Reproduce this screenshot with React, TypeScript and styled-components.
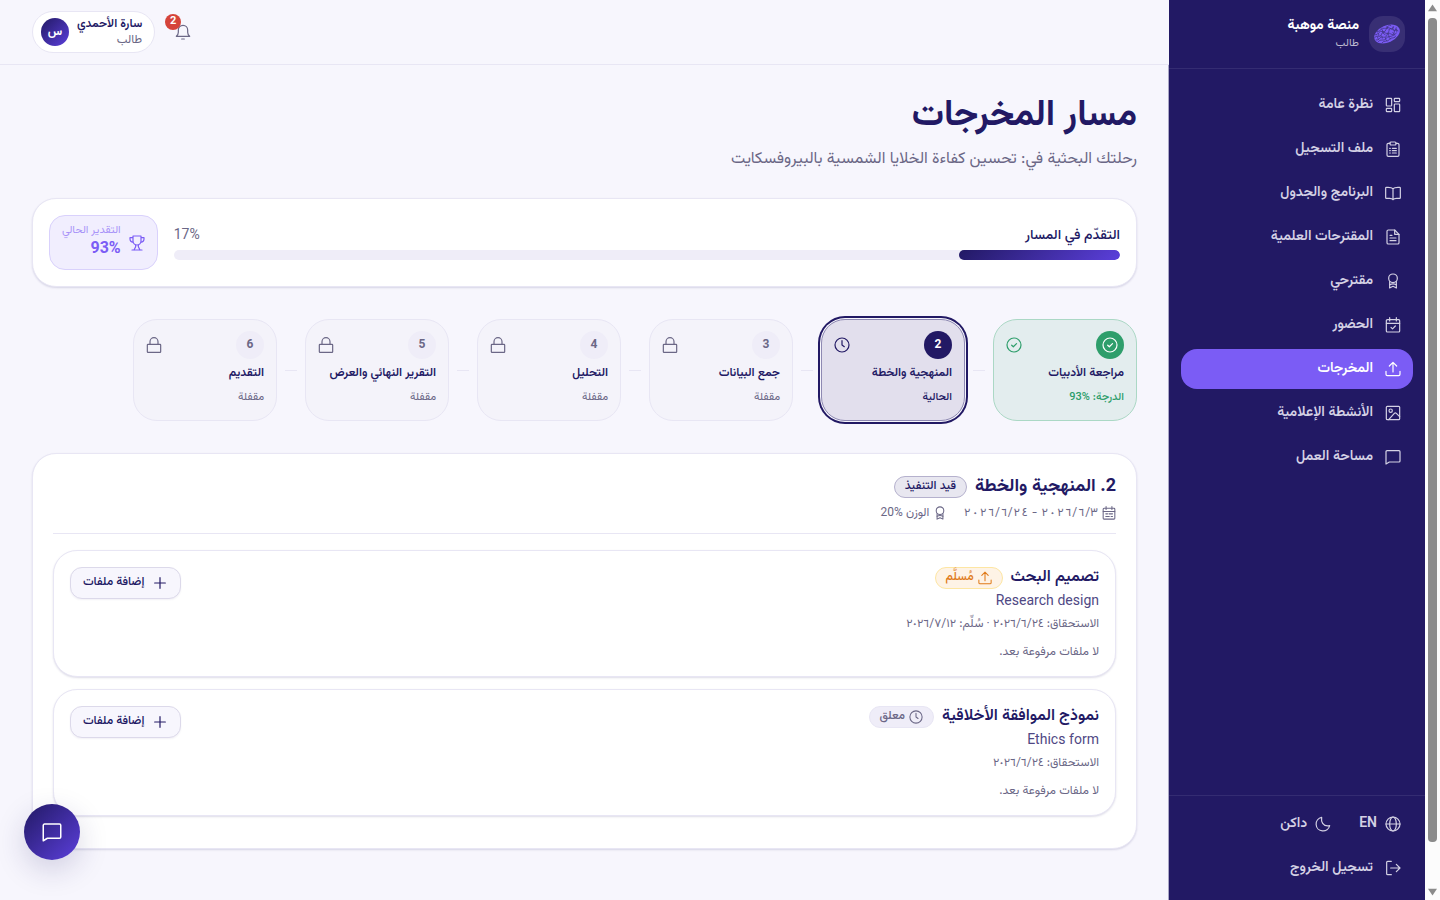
import React from "react";
import styled, { createGlobalStyle, css } from "styled-components";

const c = {
  bg: "#f7f6fd",
  navy: "#221964",
  violet: "#7b5cf5",
  indigo: "#5b3fdb",
  muted: "#6b6786",
  line: "#e8e6f4",
  soft: "#efedf8",
  green: "#2e9e6b",
};

const gradient = `linear-gradient(135deg, ${c.navy}, ${c.indigo})`;

const Global = createGlobalStyle`
  *, *::before, *::after { box-sizing: border-box; }
  body {
    margin: 0;
    background: ${c.bg};
    color: ${c.navy};
    font-family: Vazirmatn, Roboto, "Noto Sans", sans-serif;
    font-size: 14px;
    line-height: 20px;
  }
  h1, h2, h3, p, ul, ol { margin: 0; padding: 0; }
  ul, ol { list-style: none; }
  button { font: inherit; color: inherit; cursor: pointer; }
  a { color: inherit; text-decoration: none; }
`;

/* ---------- icons ---------- */

const Svg = styled.svg<{ $size: number }>`
  display: block;
  flex: none;
  width: ${(p) => p.$size}px;
  height: ${(p) => p.$size}px;
  fill: none;
  stroke: currentColor;
  stroke-width: 1.8;
  stroke-linecap: round;
  stroke-linejoin: round;
`;

const paths = {
  grid: (
    <>
      <rect x="2" y="2" width="8" height="11.5" rx="1" />
      <rect x="2" y="17" width="8" height="5" rx="1" />
      <rect x="14" y="2" width="8" height="5" rx="1" />
      <rect x="14" y="10.5" width="8" height="11.5" rx="1" />
    </>
  ),
  clipboard: (
    <>
      <path d="M7.5 3.5H5a2 2 0 0 0-2 2V21a2 2 0 0 0 2 2h14a2 2 0 0 0 2-2V5.500a2 2 0 0 0-2-2h-2.500" />
      <rect x="7.500" y="1.500" width="9" height="4.500" rx="1.500" />
      <path d="M7 11h1M11 11h6M7 14.500h1M11 14.500h6M7 18h1M11 18h6" />
    </>
  ),
  book: <path d="M12 5.500C10.500 4 8 3.500 4.500 3.500H2a1 1 0 0 0-1 1V19a1 1 0 0 0 1 1h5c2.500 0 4 .7 5 2 1-1.300 2.500-2 5-2h5a1 1 0 0 0 1-1V4.500a1 1 0 0 0-1-1h-2.500c-3.500 0-6 .5-7.500 2zm0 0V22" />,
  file: (
    <>
      <path d="M14.500 1.500H5a2 2 0 0 0-2 2v17a2 2 0 0 0 2 2h14a2 2 0 0 0 2-2V8z" />
      <path d="M14.500 1.500V8H21M7.500 9.500h3M7.500 13.500h9M7.500 17.500h9" />
    </>
  ),
  award: (
    <>
      <circle cx="12" cy="8" r="6.500" />
      <path d="M7 13v9.500l5-2.500 5 2.500V13" />
      <path d="M7 17.500c3-1.500 7-1.500 10 0" />
    </>
  ),
  calendarCheck: (
    <>
      <rect x="2" y="4" width="20" height="18.500" rx="1.500" />
      <path d="M7 1v5M17 1v5M2 9.500h20M9 15.500l2.300 2.300L15.500 13.500" />
    </>
  ),
  calendar: (
    <>
      <rect x="2" y="4" width="20" height="18.500" rx="1.500" />
      <path d="M7 1v5M17 1v5M2 9.500h20M6.500 13.500h3M12 13.500h6M6.500 18h6M15.500 18h2.500" />
    </>
  ),
  upload: <path d="M12 16.500V2M6.500 7.500 12 2l5.500 5.500M1.500 15.500V20a2 2 0 0 0 2 2h17a2 2 0 0 0 2-2v-4.500" />,
  image: (
    <>
      <rect x="2" y="2" width="20" height="20" rx="1.500" />
      <circle cx="8.500" cy="8.500" r="2.500" />
      <path d="M5.500 22 14 12.500c1-1 2-1 3 0l5 5" />
    </>
  ),
  chat: <path d="M3 2.500h18a1.500 1.500 0 0 1 1.500 1.500v14a1.500 1.500 0 0 1-1.500 1.500H6.500L1.500 22.500V4A1.500 1.500 0 0 1 3 2.500z" />,
  globe: (
    <>
      <circle cx="12" cy="12" r="10.500" />
      <ellipse cx="12" cy="12" rx="5" ry="10.500" />
      <path d="M1.500 12h21" />
    </>
  ),
  moon: <path d="M10 2A10.300 10.300 0 1 0 22 14.500C17 15.500 13.500 14 11.500 11 9.500 8 9.500 5 10 2z" />,
  logout: <path d="M9.500 2H4a1.500 1.500 0 0 0-1.500 1.500v17A1.500 1.500 0 0 0 4 22h5.500M8.500 12h14M17 6.500l5.500 5.500-5.500 5.500" />,
  bell: (
    <>
      <path d="M2 18.500c2-1.500 3-3.500 3-6V9a7 7 0 0 1 14 0v3.500c0 2.500 1 4.500 3 6z" />
      <path d="M10 22.500h4" />
    </>
  ),
  trophy: (
    <>
      <path d="M6 1.500h12V9a6 6 0 0 1-12 0zM6 4H1.500v2c0 3 1.500 4.500 5 5M18 4h4.500v2c0 3-1.500 4.500-5 5" />
      <path d="M10 15v2.500L7.500 22.500M14 15v2.500l2.500 5M4.500 22.500h15" />
    </>
  ),
  checkCircle: (
    <>
      <circle cx="12" cy="12" r="10.500" />
      <path d="M8.500 12.300l2.500 2.400 4.800-4.700" />
    </>
  ),
  clock: (
    <>
      <circle cx="12" cy="12" r="10.500" />
      <path d="M12 5.500V12l3.500 2.500" />
    </>
  ),
  lock: (
    <>
      <rect x="2" y="11" width="20" height="12" rx="1" />
      <path d="M6 11V7a6 6 0 0 1 12 0v4" />
    </>
  ),
  plus: <path d="M12 4v16M4 12h16" />,
};
type IconName = keyof typeof paths;

const Icon = ({ name, size = 16 }: { name: IconName; size?: number }) => (
  <Svg $size={size} viewBox="0 0 24 24" aria-hidden="true">
    {paths[name]}
  </Svg>
);

/* ---------- shell ---------- */

const Shell = styled.div`
  display: flex;
  height: 100vh;
  overflow: hidden;
`;

const Sidebar = styled.aside`
  display: flex;
  flex-direction: column;
  flex: none;
  width: 256px;
  background: ${c.navy};
  color: #d4d1e4;
  font-weight: 600;
`;

const Brand = styled.div`
  display: flex;
  align-items: center;
  gap: 10px;
  height: 69px;
  padding: 0 20px;
  border-bottom: 1px solid #342c72;
`;

const LogoTile = styled.div`
  display: grid;
  place-items: center;
  width: 36px;
  height: 36px;
  border-radius: 14px;
  background: #382f74;
`;

const BrandName = styled.p`
  color: #fff;
  font-weight: 700;
  line-height: 18px;
`;

const BrandRole = styled.p`
  color: #bdb9d0;
  font-size: 11px;
  font-weight: 400;
  line-height: 14px;
`;

const Nav = styled.nav`
  flex: 1;
  padding: 16px 12px;
`;

const NavList = styled.ul`
  display: flex;
  flex-direction: column;
  gap: 4px;
`;

const navItem = css`
  display: flex;
  align-items: center;
  gap: 12px;
  height: 40px;
  padding: 0 12px;
  border: 0;
  border-radius: 16px;
`;

const NavLink = styled.a<{ $active?: boolean }>`
  ${navItem}
  background: ${(p) => (p.$active ? c.violet : "transparent")};
  color: ${(p) => (p.$active ? "#fff" : "inherit")};
`;

const SideFoot = styled.div`
  display: flex;
  flex-direction: column;
  gap: 4px;
  padding: 8px 12px 12px;
  border-top: 1px solid #342c72;
`;

const FootRow = styled.div`
  display: flex;
  gap: 4px;
`;

const FootButton = styled.button<{ $gap?: number }>`
  ${navItem}
  gap: ${(p) => p.$gap || 12}px;
  background: none;
`;

const Column = styled.div`
  display: flex;
  flex-direction: column;
  flex: 1;
  min-width: 0;
`;

const Header = styled.header`
  display: flex;
  align-items: center;
  justify-content: flex-end;
  gap: 12px;
  flex: none;
  height: 65px;
  padding: 0 32px;
  border-bottom: 1px solid ${c.line};
`;

const BellButton = styled.button`
  position: relative;
  display: grid;
  place-items: center;
  width: 32px;
  height: 32px;
  padding: 0;
  border: 0;
  background: none;
  color: ${c.muted};
`;

const BellBadge = styled.span`
  position: absolute;
  top: -2px;
  left: -2px;
  width: 16px;
  height: 16px;
  border-radius: 50%;
  background: #d5443a;
  color: #fff;
  font-size: 11px;
  font-weight: 700;
  line-height: 16px;
`;

const UserButton = styled.button`
  display: flex;
  align-items: center;
  gap: 8px;
  height: 42px;
  padding: 0 12px 0 8px;
  border: 1px solid ${c.line};
  border-radius: 21px;
  background: #fff;
  text-align: start;
`;

const UserName = styled.span`
  display: block;
  font-size: 12px;
  font-weight: 600;
  line-height: 16px;
`;

const UserRole = styled.span`
  display: block;
  color: ${c.muted};
  font-size: 12px;
  line-height: 16px;
`;

const Avatar = styled.span`
  display: grid;
  place-items: center;
  width: 28px;
  height: 28px;
  border-radius: 50%;
  background: ${gradient};
  color: #fff;
  font-size: 12px;
  font-weight: 700;
`;

const Main = styled.main`
  flex: 1;
  min-height: 0;
  padding: 29px 31px 0 32px;
  border-inline-start: 1px solid #aaa6c6;
`;

const Title = styled.h1`
  font-size: 36px;
  font-weight: 700;
  line-height: 44px;
`;

const Subtitle = styled.p`
  margin-top: 10px;
  color: ${c.muted};
  font-size: 16px;
  line-height: 24px;
`;

const panel = css`
  border: 1px solid ${c.line};
  border-radius: 24px;
  background: #fff;
  box-shadow: 0 1px 2px rgba(34, 25, 100, 0.15);
`;

/* ---------- progress ---------- */

const ProgressCard = styled.section`
  ${panel}
  display: flex;
  align-items: center;
  gap: 16px;
  margin-top: 26px;
  padding: 16px;
`;

const ProgressBody = styled.div`
  flex: 1;
`;

const ProgressTop = styled.div`
  display: flex;
  justify-content: space-between;
  margin-bottom: 4px;
  font-weight: 500;
`;

const ProgressValue = styled.span`
  color: ${c.muted};
  font-weight: 400;
`;

const Track = styled.div`
  height: 10px;
  border-radius: 5px;
  background: ${c.soft};
  overflow: hidden;
`;

const Fill = styled.div`
  height: 100%;
  border-radius: 5px;
  background: ${gradient};
`;

const Grade = styled.div`
  display: flex;
  align-items: center;
  gap: 8px;
  height: 55px;
  padding: 0 12px;
  border: 1px solid #d9d1fc;
  border-radius: 16px;
  background: #f1eefe;
  color: ${c.violet};
`;

const GradeLabel = styled.p`
  color: #a893f8;
  font-size: 11px;
  line-height: 16px;
`;

const GradeValue = styled.p`
  margin-bottom: 2px;
  font-size: 16px;
  font-weight: 700;
  line-height: 22px;
`;

/* ---------- steps ---------- */

const Steps = styled.ol`
  display: flex;
  align-items: center;
  gap: 8px;
  margin-top: 32px;
`;

type State = "done" | "current" | "locked";

const stepLook = {
  done: css`
    border-color: #abd8c5;
    background: #e3edee;
  `,
  current: css`
    border-color: #8e89b2;
    background: #e2dfed;
    box-shadow: 0 0 0 1px ${c.bg}, 0 0 0 3px ${c.navy};
  `,
  locked: css`
    background: #f4f3fa;
  `,
};

const StepCard = styled.button<{ $state: State }>`
  display: flex;
  flex-direction: column;
  width: 144px;
  height: 102px;
  padding: 11px 12px;
  border: 1px solid ${c.line};
  border-radius: 24px;
  text-align: start;
  ${(p) => stepLook[p.$state]}
`;

const StepTop = styled.span<{ $state: State }>`
  display: flex;
  align-items: center;
  justify-content: space-between;
  color: ${(p) => ({ done: c.green, current: c.navy, locked: c.muted })[p.$state]};
`;

const StepNumber = styled.span<{ $state: State }>`
  display: grid;
  place-items: center;
  width: 28px;
  height: 28px;
  border-radius: 50%;
  background: ${(p) => ({ done: c.green, current: c.navy, locked: c.soft })[p.$state]};
  color: ${(p) => (p.$state === "locked" ? c.muted : "#fff")};
  font-size: 12px;
  font-weight: 700;
`;

const StepName = styled.span`
  margin-top: 4px;
  font-size: 12px;
  font-weight: 600;
  line-height: 20px;
`;

const StepNote = styled.span<{ $state: State }>`
  margin-top: 6px;
  color: ${(p) => ({ done: c.green, current: c.navy, locked: c.muted })[p.$state]};
  font-size: 11px;
  font-weight: ${(p) => (p.$state === "locked" ? 400 : 500)};
  line-height: 18px;
`;

const StepItem = styled.li`
  display: flex;
  align-items: center;
  gap: 8px;

  &:not(:last-child)::after {
    content: "";
    width: 12px;
    height: 1px;
    background: ${c.line};
  }
`;

/* ---------- detail ---------- */

const Detail = styled.section`
  ${panel}
  margin-top: 32px;
  padding: 20px 20px 32px;
`;

const DetailHead = styled.header`
  padding-bottom: 12px;
  border-bottom: 1px solid ${c.line};
`;

const Row = styled.div`
  display: flex;
  align-items: center;
  gap: 8px;
`;

const DetailTitle = styled.h2`
  font-size: 18px;
  font-weight: 700;
  line-height: 26px;
`;

const tones = {
  progress: css`
    border-color: #b5b1cd;
    background: #e8e7f0;
    color: ${c.navy};
  `,
  sent: css`
    border-color: #fde6a3;
    background: #fef3e6;
    color: #e07b1a;
  `,
  pending: css`
    border-color: ${c.line};
    background: ${c.soft};
    color: ${c.muted};
  `,
};

const Badge = styled.span<{ $tone: keyof typeof tones }>`
  display: flex;
  align-items: center;
  gap: 4px;
  height: 22px;
  padding: 0 10px;
  border: 1px solid;
  border-radius: 11px;
  font-size: 12px;
  font-weight: 500;
  line-height: 18px;
  ${(p) => tones[p.$tone]}
`;

const BadgeText = styled.span`
  padding-bottom: 2px;
`;

const Meta = styled.div`
  display: flex;
  gap: 16px;
  margin-top: 5px;
  color: ${c.muted};
  font-size: 12px;
  line-height: 16px;
  font-variant-numeric: tabular-nums;
`;

const MetaItem = styled.span`
  display: flex;
  align-items: center;
  gap: 4px;
`;

const Tasks = styled.ul`
  display: flex;
  flex-direction: column;
  gap: 12px;
  margin-top: 16px;
`;

const Task = styled.li`
  ${panel}
  display: flex;
  align-items: flex-start;
  justify-content: space-between;
  padding: 16px;
`;

const TaskTitle = styled.h3`
  font-size: 16px;
  font-weight: 600;
  line-height: 20px;
`;

const TaskEnglish = styled.p`
  margin-top: 3px;
  color: #4f4884;
  font-size: 14px;
  line-height: 20px;
`;

const TaskNote = styled.p<{ $top: number }>`
  margin-top: ${(p) => p.$top}px;
  color: ${c.muted};
  font-size: 12px;
  line-height: 16px;
`;

const AddButton = styled.button`
  display: flex;
  align-items: center;
  gap: 8px;
  height: 32px;
  padding: 0 12px;
  border: 1px solid #dcd9ea;
  border-radius: 12px;
  background: ${c.bg};
  box-shadow: 0 1px 2px rgba(34, 25, 100, 0.06);
  font-size: 12px;
  font-weight: 500;
`;

const ChatButton = styled.button`
  position: fixed;
  left: 24px;
  bottom: 40px;
  display: grid;
  place-items: center;
  width: 56px;
  height: 56px;
  padding: 0;
  border: 0;
  border-radius: 50%;
  background: ${gradient};
  box-shadow: 0 10px 30px rgba(34, 25, 100, 0.18);
  color: #fff;
`;

/* ---------- scroll gutter ---------- */

const Gutter = styled.div`
  display: flex;
  flex-direction: column;
  align-items: center;
  justify-content: space-between;
  flex: none;
  width: 15px;
  padding: 4px 0;
  background: #fcfcfc;
`;

const Thumb = styled.div`
  flex: 1;
  width: 9px;
  margin: 6px 0 46px;
  border-radius: 4px;
  background: #8b8b8b;
`;

const Arrow = styled.svg`
  width: 9px;
  height: 8px;
  fill: #8b8b8b;
`;

/* ---------- data ---------- */

const nav: { icon: IconName; text: string; active?: boolean }[] = [
  { icon: "grid", text: "نظرة عامة" },
  { icon: "clipboard", text: "ملف التسجيل" },
  { icon: "book", text: "البرنامج والجدول" },
  { icon: "file", text: "المقترحات العلمية" },
  { icon: "award", text: "مقترحي" },
  { icon: "calendarCheck", text: "الحضور" },
  { icon: "upload", text: "المخرجات", active: true },
  { icon: "image", text: "الأنشطة الإعلامية" },
  { icon: "chat", text: "مساحة العمل" },
];

const steps: { name: string; state: State; note: React.ReactNode }[] = [
  { name: "مراجعة الأدبيات", state: "done", note: <span>الدرجة: <bdi>93%</bdi></span> },
  { name: "المنهجية والخطة", state: "current", note: "الحالية" },
  { name: "جمع البيانات", state: "locked", note: "مقفلة" },
  { name: "التحليل", state: "locked", note: "مقفلة" },
  { name: "التقرير النهائي والعرض", state: "locked", note: "مقفلة" },
  { name: "التقديم", state: "locked", note: "مقفلة" },
];

const stepIcon: Record<State, IconName> = { done: "checkCircle", current: "clock", locked: "lock" };

const RLM = "\u200f";
const date = (d: string, m: string, y: string) => `${d}${RLM}/${m}${RLM}/${y}`;

const tasks: { title: string; en: string; tone: "sent" | "pending"; icon: IconName; status: string; due: string }[] = [
  {
    title: "تصميم البحث",
    en: "Research design",
    tone: "sent",
    icon: "upload",
    status: "مُسلَّم",
    due: `الاستحقاق: ${date("٢٤", "٦", "٢٠٢٦")} · سُلِّم: ${date("١٢", "٧", "٢٠٢٦")}`,
  },
  {
    title: "نموذج الموافقة الأخلاقية",
    en: "Ethics form",
    tone: "pending",
    icon: "clock",
    status: "معلق",
    due: `الاستحقاق: ${date("٢٤", "٦", "٢٠٢٦")}`,
  },
];

const Logo = () => (
  <svg width="28" height="24" viewBox="0 0 28 24" aria-hidden="true">
    <g transform="rotate(-24 14 12)">
      <ellipse cx="14" cy="12" rx="13.5" ry="8.500" fill={c.violet} />
      <g fill="none" stroke="#382f74" strokeWidth="0.6" strokeLinecap="round">
        <path d="M1 10.500q2-2 4 0t4-.5 4 .5 4-.5 4 .5 4-.5" />
        <path d="M1.500 13q2 1.500 4 0t4 .5 4-.5 4 .5 4-.5 4 .5" />
        <path d="M3 8q2 1 4-.5t4 .5 4-.5 4 .5 4 0" />
        <path d="M3 15.500q2-1.500 4 0t4 .3 4-.5 4 .5 4-.8" />
        <path d="M6 5.800q2 1 4-.3t4 .3 4-.3 3 .5M6 18q2-1 4 0t4 0 4 0 3-.6" />
        <path d="M6 7q1 1.500 0 3M11 5q1 1.500 0 3t1 4M17 5q-1 1.500 0 3M22 8q-1 1.500 0 3M8 11q1 1.500 0 3M15 11q1 1.500 0 3t0 4M20 13q1 1.500 0 3M11 15q-1 1 0 3M24 11q1 1 0 3M4 11v2" />
      </g>
    </g>
  </svg>
);

const ScrollGutter = () => (
  <Gutter aria-hidden="true">
    <Arrow viewBox="0 0 10 8">
      <path d="M5 0l5 7.500H0z" />
    </Arrow>
    <Thumb />
    <Arrow viewBox="0 0 10 8">
      <path d="M5 8L0 .5h10z" />
    </Arrow>
  </Gutter>
);

const BrandText = styled.div`
  display: flex;
  flex-direction: column;
  gap: 2px;
`;

export default function App() {
  return (
    <Shell dir="rtl" lang="ar">
      <Global />
      <ScrollGutter />
      <Sidebar>
        <Brand>
          <LogoTile>
            <Logo />
          </LogoTile>
          <BrandText>
            <BrandName>منصة موهبة</BrandName>
            <BrandRole>طالب</BrandRole>
          </BrandText>
        </Brand>
        <Nav aria-label="القائمة">
          <NavList>
            {nav.map((n) => (
              <li key={n.text}>
                <NavLink href="#" $active={n.active} aria-current={n.active ? "page" : undefined}>
                  <Icon name={n.icon} />
                  {n.text}
                </NavLink>
              </li>
            ))}
          </NavList>
        </Nav>
        <SideFoot>
          <FootRow>
            <FootButton type="button" $gap={8}>
              <Icon name="globe" />
              EN
            </FootButton>
            <FootButton type="button" $gap={8}>
              <Icon name="moon" />
              داكن
            </FootButton>
          </FootRow>
          <FootButton type="button">
            <Icon name="logout" />
            تسجيل الخروج
          </FootButton>
        </SideFoot>
      </Sidebar>

      <Column>
        <Header>
          <BellButton type="button" aria-label="الإشعارات">
            <Icon name="bell" />
            <BellBadge>2</BellBadge>
          </BellButton>
          <UserButton type="button">
            <span>
              <UserName>سارة الأحمدي</UserName>
              <UserRole>طالب</UserRole>
            </span>
            <Avatar>س</Avatar>
          </UserButton>
        </Header>

        <Main>
          <Title>مسار المخرجات</Title>
          <Subtitle>رحلتك البحثية في: تحسين كفاءة الخلايا الشمسية بالبيروفسكايت</Subtitle>

          <ProgressCard>
            <ProgressBody>
              <ProgressTop>
                <span>التقدّم في المسار</span>
                <ProgressValue>17%</ProgressValue>
              </ProgressTop>
              <Track role="progressbar" aria-valuenow={17} aria-label="التقدّم في المسار">
                <Fill style={{ width: "17%" }} />
              </Track>
            </ProgressBody>
            <Grade>
              <Icon name="trophy" />
              <div>
                <GradeLabel>التقدير الحالي</GradeLabel>
                <GradeValue>
                  <bdi>93%</bdi>
                </GradeValue>
              </div>
            </Grade>
          </ProgressCard>

          <Steps>
            {steps.map((s, i) => (
              <StepItem key={s.name}>
                <StepCard type="button" $state={s.state}>
                  <StepTop $state={s.state}>
                    <StepNumber $state={s.state}>
                      {s.state === "done" ? <Icon name="checkCircle" /> : i + 1}
                    </StepNumber>
                    <Icon name={stepIcon[s.state]} />
                  </StepTop>
                  <StepName>{s.name}</StepName>
                  <StepNote $state={s.state}>{s.note}</StepNote>
                </StepCard>
              </StepItem>
            ))}
          </Steps>

          <Detail>
            <DetailHead>
              <Row>
                <DetailTitle>2. المنهجية والخطة</DetailTitle>
                <Badge $tone="progress">
                  <BadgeText>قيد التنفيذ</BadgeText>
                </Badge>
              </Row>
              <Meta>
                <MetaItem>
                  <Icon name="calendar" size={14} />
                  {date("٣", "٦", "٢٠٢٦")} - {date("٢٤", "٦", "٢٠٢٦")}
                </MetaItem>
                <MetaItem>
                  <Icon name="award" size={14} />
                  <span>
                    الوزن <bdi>20%</bdi>
                  </span>
                </MetaItem>
              </Meta>
            </DetailHead>
            <Tasks>
              {tasks.map((t) => (
                <Task key={t.en}>
                  <div>
                    <Row>
                      <TaskTitle>{t.title}</TaskTitle>
                      <Badge $tone={t.tone}>
                        <Icon name={t.icon} size={14} />
                        <BadgeText>{t.status}</BadgeText>
                      </Badge>
                    </Row>
                    <TaskEnglish>{t.en}</TaskEnglish>
                    <TaskNote $top={4}>{t.due}</TaskNote>
                    <TaskNote $top={12}>لا ملفات مرفوعة بعد.</TaskNote>
                  </div>
                  <AddButton type="button">
                    <Icon name="plus" />
                    <BadgeText>إضافة ملفات</BadgeText>
                  </AddButton>
                </Task>
              ))}
            </Tasks>
          </Detail>
        </Main>
      </Column>
      <ChatButton type="button" aria-label="المحادثة">
        <Icon name="chat" size={20} />
      </ChatButton>
    </Shell>
  );
}
